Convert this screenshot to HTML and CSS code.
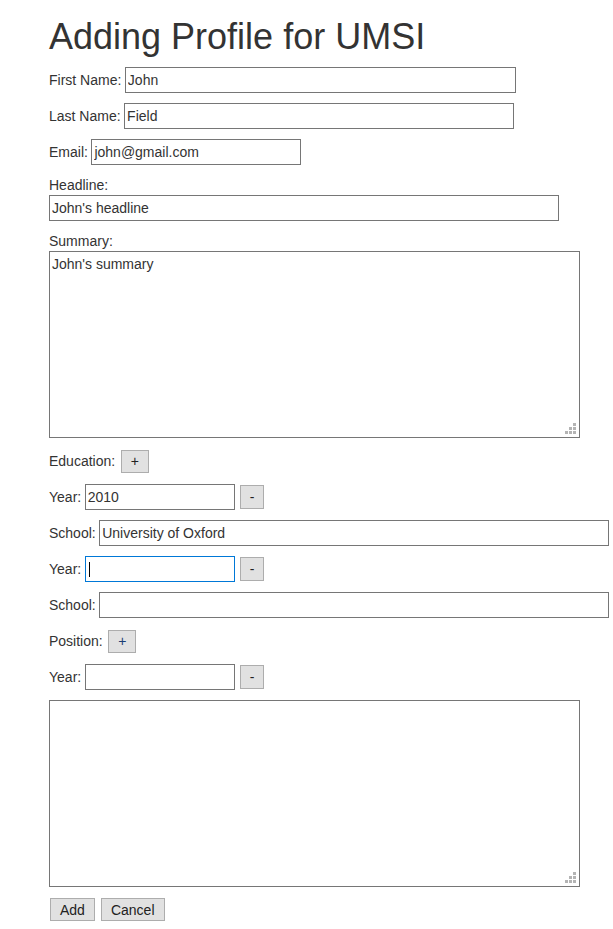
FILE: index.html
```html
<!DOCTYPE html>
<html>
<head>
<meta charset="utf-8">
<title>Adding Profile</title>
<link rel="stylesheet" href="styles.css">
</head>
<body>
<div class="container">
  <h1 class="title">Adding Profile for UMSI</h1>
  <form class="form">
    <div class="row"><label>First Name:</label><input class="field w-first" type="text" value="John"></div>
    <div class="row"><label>Last Name:</label><input class="field w-last" type="text" value="Field"></div>
    <div class="row"><label>Email:</label><input class="field w-email" type="text" value="john@gmail.com"></div>
    <div class="stack">
      <label class="stack-label">Headline:</label>
      <input class="field w-wide" type="text" value="John's headline">
    </div>
    <div class="stack">
      <label class="stack-label">Summary:</label>
      <div class="area-wrap">
        <textarea class="area">John's summary</textarea>
        <svg class="grip" width="11" height="11" viewBox="0 0 11 11" aria-hidden="true">
          <rect x="8" y="0" width="3" height="3"/>
          <rect x="4" y="4" width="3" height="3"/>
          <rect x="8" y="4" width="3" height="3"/>
          <rect x="0" y="8" width="3" height="3"/>
          <rect x="4" y="8" width="3" height="3"/>
          <rect x="8" y="8" width="3" height="3"/>
        </svg>
      </div>
    </div>
    <div class="row"><label>Education:</label><button type="button" class="btn btn-add">+</button></div>
    <div class="row"><label>Year:</label><input class="field w-year" type="text" value="2010"><button type="button" class="btn btn-minus">-</button></div>
    <div class="row"><label>School:</label><input class="field w-wide" type="text" value="University of Oxford"></div>
    <div class="row"><label>Year:</label><input class="field w-year focused" type="text" value=""><button type="button" class="btn btn-minus">-</button></div>
    <div class="row"><label>School:</label><input class="field w-wide" type="text" value=""></div>
    <div class="row"><label>Position:</label><button type="button" class="btn btn-add btn-blue">+</button></div>
    <div class="row"><label>Year:</label><input class="field w-year" type="text" value=""><button type="button" class="btn btn-minus">-</button></div>
    <div class="stack">
      <div class="area-wrap">
        <textarea class="area"></textarea>
        <svg class="grip" width="11" height="11" viewBox="0 0 11 11" aria-hidden="true">
          <rect x="8" y="0" width="3" height="3"/>
          <rect x="4" y="4" width="3" height="3"/>
          <rect x="8" y="4" width="3" height="3"/>
          <rect x="0" y="8" width="3" height="3"/>
          <rect x="4" y="8" width="3" height="3"/>
          <rect x="8" y="8" width="3" height="3"/>
        </svg>
      </div>
    </div>
    <div class="actions">
      <button type="button" class="btn btn-act">Add</button>
      <button type="button" class="btn btn-act">Cancel</button>
    </div>
  </form>
</div>
</body>
</html>
```
FILE: styles.css
```css
html, body {
  margin: 0;
  padding: 0;
  background: #fff;
}
body {
  font-family: "Liberation Sans", Arial, Helvetica, sans-serif;
  font-size: 14px;
  line-height: 20px;
  color: #333;
}
.container {
  padding: 17px 0 0 49px;
}
.title {
  margin: 0 0 10px 0;
  font-size: 36px;
  line-height: 40px;
  font-weight: 500;
  color: #333;
}
.form {
  margin: 0;
}
.row {
  display: flex;
  align-items: center;
  gap: 3.5px;
  height: 26px;
  margin-bottom: 10px;
}
.row label {
  white-space: nowrap;
}
.stack {
  display: flex;
  flex-direction: column;
  align-items: flex-start;
  margin-bottom: 10px;
}
.stack-label {
  height: 20px;
  line-height: 20px;
}
.field {
  box-sizing: border-box;
  height: 26px;
  margin: 0;
  padding: 1px 2px;
  border: 1px solid #767676;
  border-radius: 0;
  font-family: "Liberation Sans", Arial, sans-serif;
  font-size: 14px;
  color: #333;
  background: #fff;
  outline: none;
}
.w-first { width: 391px; }
.w-last { width: 390px; }
.w-email { width: 210px; }
.w-wide { width: 510px; }
.w-year { width: 150px; }
.focused {
  border-color: #0078d7;
  background: #fff linear-gradient(#000, #000) no-repeat 3px 5px / 1px 15px;
}
.area-wrap {
  position: relative;
}
.area {
  box-sizing: border-box;
  width: 531px;
  height: 187px;
  margin: 0;
  padding: 4px 2px 2px;
  border: 1px solid #767676;
  border-radius: 0;
  font-family: "Liberation Sans", Arial, sans-serif;
  font-size: 14px;
  line-height: 16px;
  color: #333;
  display: block;
  outline: none;
  resize: none;
}
.grip {
  position: absolute;
  right: 4px;
  bottom: 4px;
  fill: #b4b4b4;
}
.btn {
  box-sizing: border-box;
  height: 24px;
  margin: 0;
  padding: 0 9px;
  border: 1px solid #adadad;
  border-radius: 0;
  background: #e1e1e1;
  font-family: "Liberation Sans", Arial, sans-serif;
  font-size: 14px;
  line-height: 20px;
  color: #222;
}
.btn-add {
  height: 23px;
  margin-left: 2px;
}
.btn-minus {
  margin-left: 1.5px;
}
.btn-blue {
  color: #1a3d73;
}
.actions {
  display: flex;
  gap: 6px;
  padding-left: 1px;
  padding-top: 1px;
}
.btn-act {
  height: 23px;
}
```
